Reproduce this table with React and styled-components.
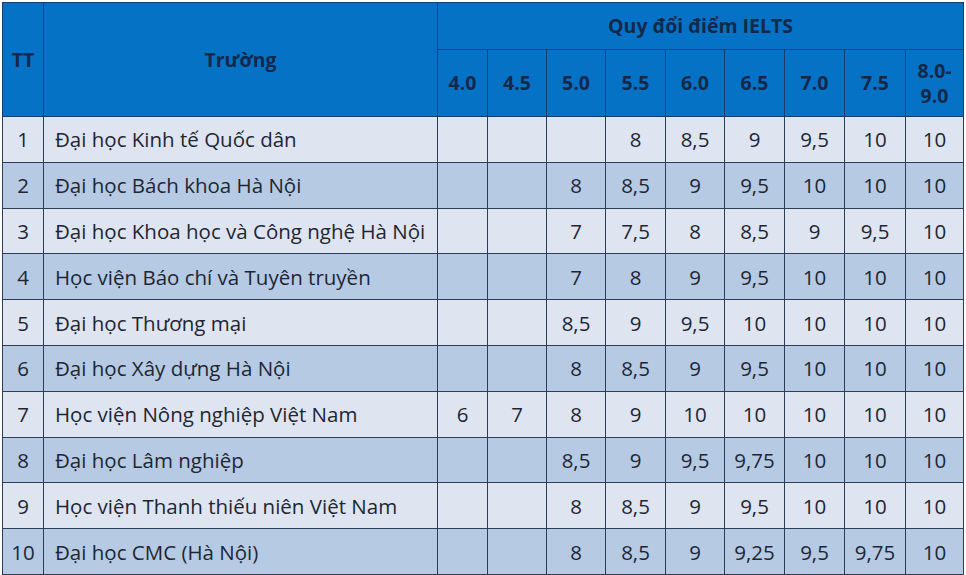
import React from "react"
import styled, { createGlobalStyle } from "styled-components"

const GlobalStyle = createGlobalStyle`
  html, body {
    margin: 0;
    padding: 0;
    background: #ffffff;
  }
  body {
    font-family: "Open Sans", "Noto Sans", sans-serif;
  }
`

const Table = styled.table`
  margin: 2px 0 0 2px;
  width: 962px;
  table-layout: fixed;
  border-collapse: collapse;
  border: 1px solid #263a5c;
  color: #1e2633;
  font-size: 20.5px;
`

const HeadCell = styled.th`
  background-color: #0572c6;
  color: #14284a;
  font-weight: 700;
  font-size: 19.5px;
  text-align: center;
  vertical-align: middle;
  border: 1px solid #1d3c66;
  padding: 0;
  line-height: 1.3;
`

const HeadRow = styled.tr`
  height: ${(p) => p.$h}px;
`

const BodyRow = styled.tr`
  height: 45.8px;
  background-color: ${(p) => (p.$alt ? "#b6cae4" : "#dee5f1")};
`

const Cell = styled.td`
  border: 1px solid #2c3d58;
  padding: 0 ${(p) => (p.$left ? "11px" : "0")};
  text-align: ${(p) => (p.$left ? "left" : "center")};
  vertical-align: middle;
  white-space: nowrap;
  overflow: hidden;
`

const bands = ["4.0", "4.5", "5.0", "5.5", "6.0", "6.5", "7.0", "7.5"]
const widths = [50, 59, 59, 60, 59, 60, 60, 61, 58]

const rows = [
  ["Đại học Kinh tế Quốc dân", ["", "", "", "8", "8,5", "9", "9,5", "10", "10"]],
  ["Đại học Bách khoa Hà Nội", ["", "", "8", "8,5", "9", "9,5", "10", "10", "10"]],
  ["Đại học Khoa học và Công nghệ Hà Nội", ["", "", "7", "7,5", "8", "8,5", "9", "9,5", "10"]],
  ["Học viện Báo chí và Tuyên truyền", ["", "", "7", "8", "9", "9,5", "10", "10", "10"]],
  ["Đại học Thương mại", ["", "", "8,5", "9", "9,5", "10", "10", "10", "10"]],
  ["Đại học Xây dựng Hà Nội", ["", "", "8", "8,5", "9", "9,5", "10", "10", "10"]],
  ["Học viện Nông nghiệp Việt Nam", ["6", "7", "8", "9", "10", "10", "10", "10", "10"]],
  ["Đại học Lâm nghiệp", ["", "", "8,5", "9", "9,5", "9,75", "10", "10", "10"]],
  ["Học viện Thanh thiếu niên Việt Nam", ["", "", "8", "8,5", "9", "9,5", "10", "10", "10"]],
  ["Đại học CMC (Hà Nội)", ["", "", "8", "8,5", "9", "9,25", "9,5", "9,75", "10"]],
]

export default function App() {
  return (
    <>
      <GlobalStyle />
      <Table>
        <colgroup>
          <col style={{ width: 41 }} />
          <col style={{ width: 394 }} />
          {widths.map((w, i) => (
            <col key={i} style={{ width: w }} />
          ))}
        </colgroup>
        <thead>
          <HeadRow $h={47}>
            <HeadCell rowSpan={2}>TT</HeadCell>
            <HeadCell rowSpan={2}>Trường</HeadCell>
            <HeadCell colSpan={9}>Quy đổi điểm IELTS</HeadCell>
          </HeadRow>
          <HeadRow $h={67}>
            {bands.map((b) => (
              <HeadCell key={b}>{b}</HeadCell>
            ))}
            <HeadCell>
              8.0-
              <br />
              9.0
            </HeadCell>
          </HeadRow>
        </thead>
        <tbody>
          {rows.map(([name, scores], i) => (
            <BodyRow key={name} $alt={i % 2 === 1}>
              <Cell>{i + 1}</Cell>
              <Cell $left>{name}</Cell>
              {scores.map((s, j) => (
                <Cell key={j}>{s}</Cell>
              ))}
            </BodyRow>
          ))}
        </tbody>
      </Table>
    </>
  )
}
